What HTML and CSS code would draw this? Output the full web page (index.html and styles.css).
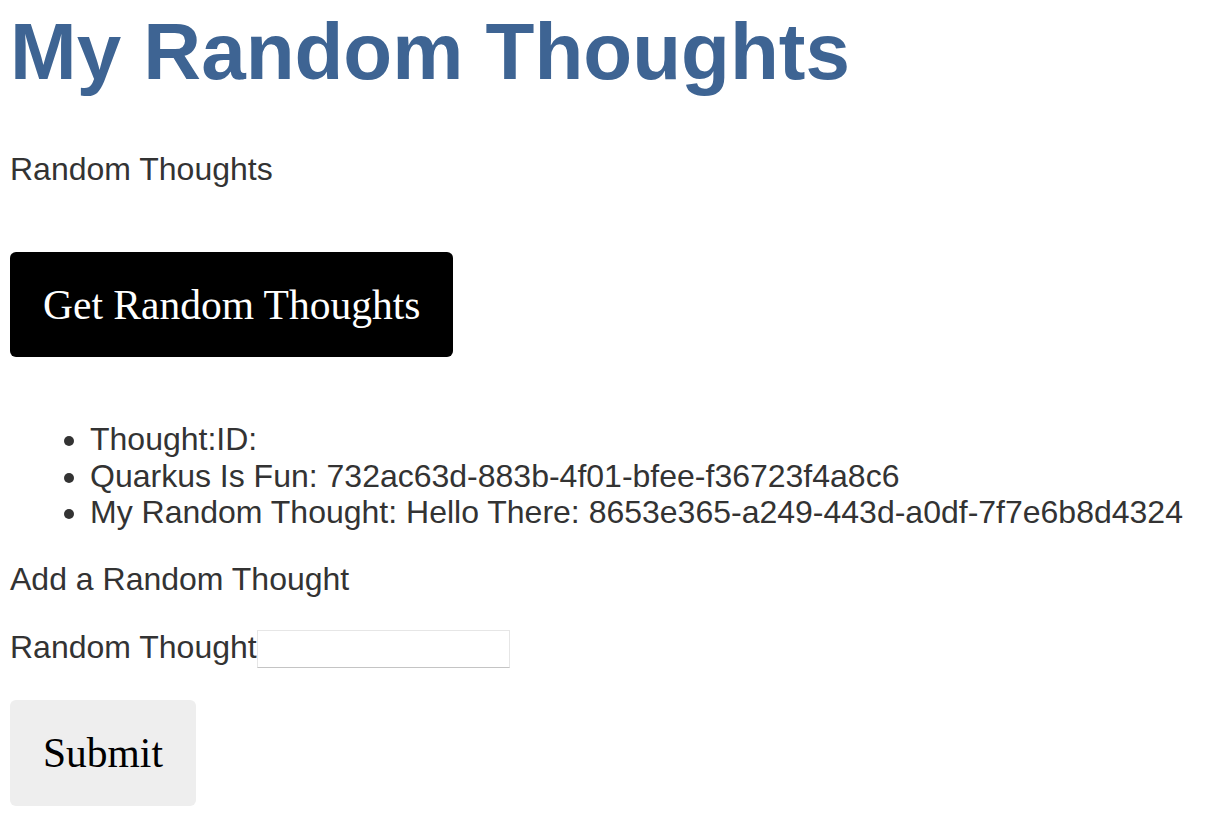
FILE: index.html
```html
<!DOCTYPE html>
<html>
<head>
<meta charset="utf-8">
<title>My Random Thoughts</title>
<link rel="stylesheet" href="styles.css">
</head>
<body>
<h1 class="title">My Random Thoughts</h1>
<p class="section-label">Random Thoughts</p>
<button class="btn btn-dark">Get Random Thoughts</button>
<ul class="thought-list">
  <li>Thought:ID:</li>
  <li>Quarkus Is Fun: 732ac63d-883b-4f01-bfee-f36723f4a8c6</li>
  <li>My Random Thought: Hello There: 8653e365-a249-443d-a0df-7f7e6b8d4324</li>
</ul>
<p class="section-label add-label">Add a Random Thought</p>
<div class="form-row">
  <label class="field-label" for="thought">Random Thought</label><input class="field-input" id="thought" type="text">
</div>
<button class="btn btn-light">Submit</button>
</body>
</html>
```
FILE: styles.css
```css
html, body {
  background: #ffffff;
}
body {
  margin: 0;
  padding: 0 0 0 10px;
  font-family: "Liberation Sans", Arial, sans-serif;
  font-size: 32px;
  line-height: 36.8px;
  color: #333333;
}
.title {
  margin: 6px 0 0;
  font-size: 80px;
  line-height: 92px;
  font-weight: bold;
  color: #3e6493;
}
.section-label {
  margin: 52.5px 0 0;
}
.btn {
  display: block;
  font-family: "Liberation Serif", "Times New Roman", serif;
  font-size: 41.5px;
  line-height: 48px;
  border: none;
  border-radius: 6px;
  cursor: pointer;
}
.btn-dark {
  margin-top: 65.1px;
  padding: 28.5px 33px;
  background: #000000;
  color: #ffffff;
}
.thought-list {
  margin: 63.5px 0 0;
  padding: 0 0 0 80px;
}
.add-label {
  margin-top: 29.5px;
}
.form-row {
  display: flex;
  align-items: flex-start;
  margin-top: 31.7px;
}
.field-label {
  display: block;
}
.field-input {
  box-sizing: border-box;
  width: 253px;
  height: 38px;
  margin: 1px 0 0;
  padding: 0 4px;
  border: 1px solid #e6e6e6;
  border-bottom-color: #c4c4c4;
  border-radius: 0;
  background: #ffffff;
  font-size: 20px;
  outline: none;
}
.btn-light {
  margin-top: 32px;
  padding: 29px 33px;
  background: #eeeeee;
  color: #000000;
}
```
